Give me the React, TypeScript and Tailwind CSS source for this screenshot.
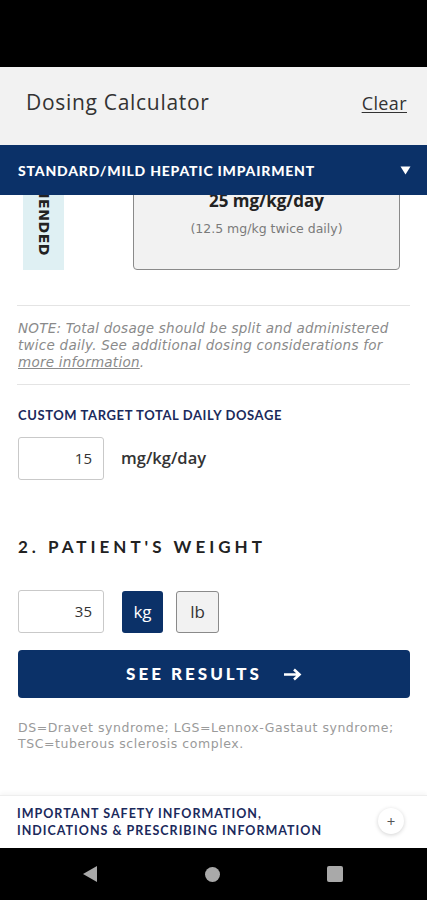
import { useState } from 'react';

const navy = 'bg-[#0b3168]';

export default function App() {
  const [unit, setUnit] = useState<'kg' | 'lb'>('kg');

  return (
    <div className="flex h-[900px] w-[427px] flex-col overflow-hidden bg-white font-['Open_Sans',sans-serif]">
      {/* status bar */}
      <div className="h-[67px] shrink-0 bg-black" />

      {/* header */}
      <div className="flex h-[78px] shrink-0 items-center justify-between bg-[#f2f2f2] pb-[6px] pl-[26px] pr-[20px]">
        <h1 className="text-[21px] tracking-[0.7px] text-[#333]">Dosing Calculator</h1>
        <button className="text-[18px] tracking-[0.4px] text-[#333] underline underline-offset-2">Clear</button>
      </div>

      {/* regimen select */}
      <div className={`flex h-[50px] shrink-0 items-center justify-between ${navy} pl-[18px] pr-[16px]`}>
        <span className="font-['Lato',sans-serif] text-[14px] font-black tracking-[0.8px] text-white">
          STANDARD/MILD HEPATIC IMPAIRMENT
        </span>
        <svg width="11" height="9" viewBox="0 0 11 9">
          <path d="M0.5 0.5h10L5.5 8.5z" fill="white" />
        </svg>
      </div>

      {/* scrolled content */}
      <div className="flex-1 overflow-hidden">
        <div className="flex h-[75px] items-end pl-[23px] pr-[27px]">
          <div className="flex h-[190px] w-[41px] shrink-0 items-end justify-center bg-[#dff0f3] pb-[14px]">
            <span className="font-['DejaVu_Sans',sans-serif] text-[14px] font-bold tracking-[0.6px] text-[#222] [writing-mode:vertical-rl]">
              RECOMMENDED
            </span>
          </div>
          <div className="ml-[69px] flex h-[115px] flex-1 flex-col items-center justify-end rounded-[4px] border border-[#8a8a8a] bg-[#f2f2f2] pb-[31px]">
            <p className="text-[17px] font-bold leading-[22px] text-[#222]">25 mg/kg/day</p>
            <p className="mt-[8px] font-['DejaVu_Sans',sans-serif] text-[12.5px] leading-[18px] text-[#7a7a7a]">
              (12.5 mg/kg twice daily)
            </p>
          </div>
        </div>

        <div className="mx-[17px] mt-[35px] h-px bg-[#e4e4e4]" />

        <p className="mx-[18px] mt-[14px] font-['DejaVu_Sans',sans-serif] text-[13.5px] italic leading-[17px] tracking-[0.25px] text-[#8a8a8a]">
          NOTE: Total dosage should be split and administered
          <br />
          twice daily. See additional dosing considerations for
          <br />
          <span className="underline">more information</span>.
        </p>

        <div className="mx-[17px] mt-[13px] h-px bg-[#e4e4e4]" />

        <p className="ml-[18px] mt-[23px] font-['Lato',sans-serif] text-[13px] font-bold leading-[15px] tracking-[0.6px] text-[#1b2a5c]">
          CUSTOM TARGET TOTAL DAILY DOSAGE
        </p>

        <div className="ml-[18px] mt-[14px] flex items-center">
          <div className="flex h-[43px] w-[86px] items-center justify-end rounded-[3px] border border-[#c9c9c9] pr-[11px] text-[15px] text-[#333]">
            15
          </div>
          <span className="ml-[17px] text-[16.5px] font-semibold text-[#333]">mg/kg/day</span>
        </div>

        <h2 className="ml-[18px] mt-[57px] font-['Lato',sans-serif] text-[17px] font-bold leading-[20px] tracking-[4px] text-[#222]">
          2. PATIENT'S WEIGHT
        </h2>

        <div className="ml-[18px] mt-[33px] flex items-center">
          <div className="flex h-[43px] w-[86px] items-center justify-end rounded-[3px] border border-[#c9c9c9] pr-[11px] text-[15px] text-[#333]">
            35
          </div>
          <button
            onClick={() => setUnit('kg')}
            className={`ml-[18px] flex h-[42px] w-[41px] items-center justify-center rounded-[3px] text-[17px] ${
              unit === 'kg' ? 'bg-[#0b3168] text-white' : 'border border-[#8a8a8a] bg-[#f2f2f2] text-[#333]'
            }`}
          >
            kg
          </button>
          <button
            onClick={() => setUnit('lb')}
            className={`ml-[13px] flex h-[42px] w-[43px] items-center justify-center rounded-[3px] text-[17px] ${
              unit === 'lb' ? 'bg-[#0b3168] text-white' : 'border border-[#8a8a8a] bg-[#f2f2f2] text-[#333]'
            }`}
          >
            lb
          </button>
        </div>

        <button
          className={`mx-[18px] mt-[17px] flex h-[48px] w-[392px] items-center justify-center gap-[21px] rounded-[4px] ${navy}`}
        >
          <span className="font-['Lato',sans-serif] text-[17px] font-black tracking-[3px] text-white">SEE RESULTS</span>
          <svg width="19" height="13" viewBox="0 0 19 13">
            <path d="M1 6.5h15M11 1.5l5.5 5-5.5 5" stroke="white" strokeWidth="2.6" fill="none" />
          </svg>
        </button>

        <p className="mx-[18px] mt-[22px] font-['DejaVu_Sans',sans-serif] text-[12.5px] leading-[16px] tracking-[0.55px] text-[#9a9a9a]">
          DS=Dravet syndrome; LGS=Lennox-Gastaut syndrome;
          <br />
          TSC=tuberous sclerosis complex.
        </p>
      </div>

      {/* ISI drawer */}
      <div className="flex h-[53px] shrink-0 items-center justify-between border-t border-[#eeeeee] bg-white pl-[17px] pr-[23px] shadow-[0_-2px_4px_rgba(0,0,0,0.04)]">
        <p className="font-['Lato',sans-serif] text-[12.5px] font-bold leading-[17px] tracking-[1px] text-[#1b2a5c]">
          IMPORTANT SAFETY INFORMATION,
          <br />
          INDICATIONS &amp; PRESCRIBING INFORMATION
        </p>
        <div className="mb-[2px] flex h-[26px] w-[26px] items-center justify-center rounded-full bg-white text-[15px] text-[#555] shadow-[0_1px_4px_rgba(0,0,0,0.18)]">
          +
        </div>
      </div>

      {/* android nav */}
      <div className="flex h-[52px] shrink-0 items-center gap-[107px] bg-black pl-[82px]">
        <svg width="16" height="18" viewBox="0 0 16 18">
          <path d="M15 1v16L1 9z" fill="#a9a9a9" />
        </svg>
        <div className="h-[15px] w-[15px] rounded-full bg-[#a9a9a9]" />
        <div className="h-[16px] w-[16px] rounded-[2px] bg-[#a9a9a9]" />
      </div>
    </div>
  );
}
